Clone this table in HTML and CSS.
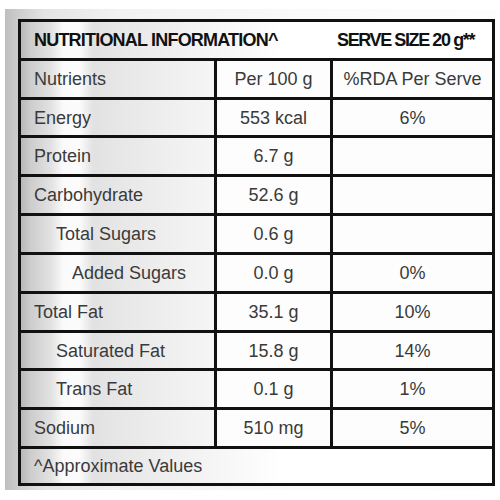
FILE: index.html
```html
<!DOCTYPE html>
<html lang="en">
<head>
<meta charset="UTF-8">
<title>Nutritional Information</title>
<link rel="stylesheet" href="styles.css">
</head>
<body>

    <section class="rotulo">
        <table class="tabela">
            <colgroup>
                <col class="col-nome">
                <col class="col-valor">
                <col class="col-rda">
            </colgroup>
            <tr>
                <td class="topo" colspan="3">
                    <div class="topo-linha">
                        <span>NUTRITIONAL INFORMATION^</span>
                        <span class="porcao">SERVE SIZE 20 g**</span>
                    </div>
                </td>
            </tr>
            <tr>
                <td class="nome">Nutrients</td>
                <td class="valor">Per 100 g</td>
                <td class="valor">%RDA Per Serve</td>
            </tr>
            <tr>
                <td class="nome">Energy</td>
                <td class="valor">553 kcal</td>
                <td class="valor">6%</td>
            </tr>
            <tr>
                <td class="nome">Protein</td>
                <td class="valor">6.7 g</td>
                <td class="valor"></td>
            </tr>
            <tr>
                <td class="nome">Carbohydrate</td>
                <td class="valor">52.6 g</td>
                <td class="valor"></td>
            </tr>
            <tr>
                <td class="nome sub">Total Sugars</td>
                <td class="valor">0.6 g</td>
                <td class="valor"></td>
            </tr>
            <tr>
                <td class="nome sub2">Added Sugars</td>
                <td class="valor">0.0 g</td>
                <td class="valor">0%</td>
            </tr>
            <tr>
                <td class="nome">Total Fat</td>
                <td class="valor">35.1 g</td>
                <td class="valor">10%</td>
            </tr>
            <tr>
                <td class="nome sub">Saturated Fat</td>
                <td class="valor">15.8 g</td>
                <td class="valor">14%</td>
            </tr>
            <tr>
                <td class="nome sub">Trans Fat</td>
                <td class="valor">0.1 g</td>
                <td class="valor">1%</td>
            </tr>
            <tr>
                <td class="nome">Sodium</td>
                <td class="valor">510 mg</td>
                <td class="valor">5%</td>
            </tr>
            <tr>
                <td class="rodape" colspan="3">^Approximate Values</td>
            </tr>
        </table>
    </section>

</body>
</html>
```

FILE: styles.css
```css
    *{
        margin: 0;
        box-sizing: border-box;
    }

    body{
        background-color: #ffffff;
        font-family: "Liberation Sans", Arial, sans-serif;
    }

    .rotulo{
        width: 492px;
        margin: 9px 0 0 5px;
        padding: 10px 2px 4px 13px;
        background: linear-gradient(90deg, #bfbfbf 0, #cccccc 13px, #e4e4e4 40px, #f2f2f2 120px, #fafafa 300px, #fdfdfd 100%);
    }

    .tabela{
        width: 477px;
        height: 467px;
        table-layout: fixed;
        border-collapse: separate;
        border-spacing: 0;
        border: 3px solid #111;
        background: linear-gradient(90deg, #b8b8b8 0, #cdcdcd 10px, #e2e2e2 30px, #fafafa 42px, #fcfcfc 58px, #e2e2e2 72px, #e9e9e9 110px, #f5f5f5 190px, #ffffff 260px);
    }

    .col-nome{
        width: 196px;
    }

    .col-valor{
        width: 116px;
    }

    .tabela td{
        border-right: 3px solid #111;
        border-bottom: 3px solid #111;
        font-size: 18px;
        line-height: 20px;
        color: #3a3a3a;
        vertical-align: middle;
        padding: 0;
    }

    .tabela td:last-child{
        border-right: none;
    }

    .tabela tr:last-child td{
        border-bottom: none;
    }

    .nome{
        padding-left: 13px !important;
        color: #2c2c2c;
    }

    .nome.sub{
        padding-left: 35px !important;
    }

    .nome.sub2{
        padding-left: 51px !important;
    }

    .valor{
        text-align: center;
        background-color: #fdfdfd;
    }

    .topo-linha{
        display: flex;
        justify-content: space-between;
        padding: 0 18px 0 13px;
        font-size: 18px;
        font-weight: bold;
        letter-spacing: -0.8px;
        color: #111;
    }

    .porcao{
        letter-spacing: -1.4px;
    }

    .rodape{
        padding-left: 13px !important;
        color: #2c2c2c;
    }
```
